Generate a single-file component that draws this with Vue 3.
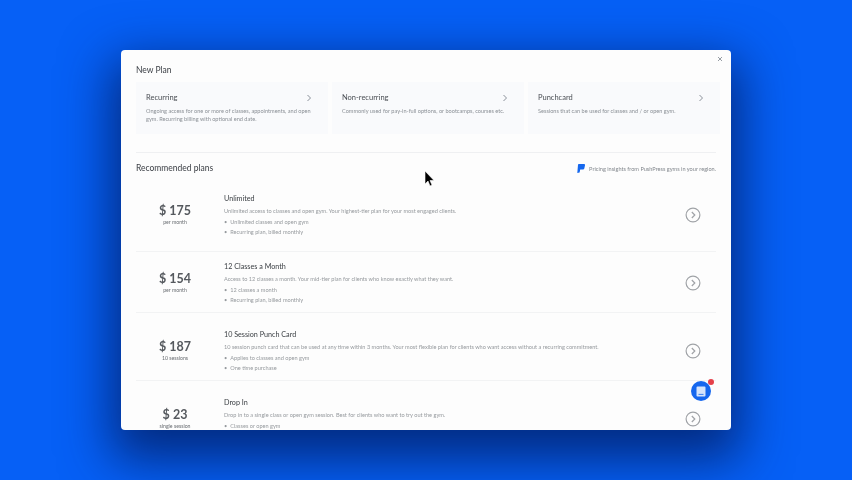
<template>
  <div class="stage">
    <section class="modal">
      <button class="close" aria-label="Close">
        <svg width="6" height="6" viewBox="0 0 6 6"><path d="M1 1l4 4M5 1L1 5" fill="none" stroke="#8b929a" stroke-width=".9" /></svg>
      </button>
      <h2 class="section-title">New Plan</h2>

      <div class="types">
        <div v-for="t in planTypes" :key="t.name" class="type-card">
          <div class="type-head">
            <span>{{ t.name }}</span>
            <svg class="chev" width="6" height="8" viewBox="0 0 6 8"><path d="M1.5 1l3 3-3 3" fill="none" stroke="#8a9099" stroke-width="1" /></svg>
          </div>
          <p>{{ t.text }}</p>
        </div>
      </div>

      <hr class="rule" />

      <div class="rec-head">
        <h2 class="section-title">Recommended plans</h2>
        <div class="insight">
          <svg width="8" height="9" viewBox="0 0 8 9"><path d="M1.8 0H7a1 1 0 0 1 1 1.200L7.300 4.600a1 1 0 0 1-1 .8H3.200L2.600 8.400 0.300 9 1 .8A.9.9 0 0 1 1.800 0z" fill="#1567ee" /></svg>
          <span>Pricing insights from PushPress gyms in your region.</span>
        </div>
      </div>

      <div class="plans">
        <article v-for="p in plans" :key="p.name" class="plan">
          <div class="price">
            <strong>$ {{ p.price }}</strong>
            <small>{{ p.unit }}</small>
          </div>
          <div class="info">
            <h3>{{ p.name }}</h3>
            <p>{{ p.text }}</p>
            <ul>
              <li v-for="b in p.bullets" :key="b">{{ b }}</li>
            </ul>
          </div>
          <svg class="go" width="16" height="16" viewBox="0 0 16 16">
            <circle cx="8" cy="8" r="6.900" fill="none" stroke="#a0a3a7" stroke-width="1.200" />
            <path d="M6.800 5L9.800 8l-3 3" fill="none" stroke="#a0a3a7" stroke-width="1.200" />
          </svg>
        </article>
      </div>

      <div class="chat">
        <svg width="10" height="11" viewBox="0 0 10 11"><path d="M1.500 0.500h7a1 1 0 0 1 1 1v8a1 1 0 0 1-1 1h-7a1 1 0 0 1-1-1v-8a1 1 0 0 1 1-1z" fill="#d5e4fb" /><path d="M2.500 8.400h5" stroke="#1567ee" stroke-width=".8" /></svg>
        <i class="dot"></i>
      </div>
    </section>

    <svg class="cursor" width="11" height="17" viewBox="0 0 11 17">
      <path d="M1 1v13l3-3 2 5 2-1-2-4.500h4z" fill="#000" stroke="#fff" stroke-width=".6" />
    </svg>
  </div>
</template>

<script setup>
const planTypes = [
  { name: 'Recurring', text: 'Ongoing access for one or more of classes, appointments, and open gym. Recurring billing with optional end date.' },
  { name: 'Non-recurring', text: 'Commonly used for pay-in-full options, or bootcamps, courses etc.' },
  { name: 'Punchcard', text: 'Sessions that can be used for classes and / or open gym.' }
]

const plans = [
  {
    name: 'Unlimited', price: 175, unit: 'per month',
    text: 'Unlimited access to classes and open gym. Your highest-tier plan for your most engaged clients.',
    bullets: ['Unlimited classes and open gym', 'Recurring plan, billed monthly']
  },
  {
    name: '12 Classes a Month', price: 154, unit: 'per month',
    text: 'Access to 12 classes a month. Your mid-tier plan for clients who know exactly what they want.',
    bullets: ['12 classes a month', 'Recurring plan, billed monthly']
  },
  {
    name: '10 Session Punch Card', price: 187, unit: '10 sessions',
    text: '10 session punch card that can be used at any time within 3 months. Your most flexible plan for clients who want access without a recurring commitment.',
    bullets: ['Applies to classes and open gym', 'One time purchase']
  },
  {
    name: 'Drop In', price: 23, unit: 'single session',
    text: 'Drop in to a single class or open gym session. Best for clients who want to try out the gym.',
    bullets: ['Classes or open gym']
  }
]
</script>

<style>
html, body { margin: 0; }
</style>

<style scoped>
.stage {
  position: relative;
  width: 852px;
  height: 480px;
  overflow: hidden;
  padding-top: 50px;
  box-sizing: border-box;
  background: #0660f6;
  font-family: Lato, "Open Sans", sans-serif;
}

.modal {
  position: relative;
  width: 610px;
  height: 380px;
  margin-left: 121px;
  padding: 15px 15px 0;
  box-sizing: border-box;
  overflow: hidden;
  background: #fdfdfd;
  border-radius: 4px;
  box-shadow: 0 20px 50px 10px rgba(3, 30, 100, 0.8);
  filter: blur(0.4px);
}

.close {
  position: absolute;
  top: 6px;
  right: 8px;
  display: flex;
  border: 0;
  padding: 0;
  background: none;
}

.section-title {
  margin: 0;
  font-size: 8.500px;
  line-height: 11px;
  font-weight: 400;
  color: #3a3e44;
}

.types {
  display: grid;
  grid-template-columns: repeat(3, 192px);
  gap: 4px;
  margin-top: 6px;
}
.type-card {
  height: 52px;
  padding: 10px 10px 0;
  box-sizing: border-box;
  background: #f9fafc;
}
.type-head {
  display: flex;
  justify-content: space-between;
  align-items: center;
  padding-right: 6px;
  font-size: 7.500px;
  line-height: 12px;
  color: #4a4e54;
}
.type-card p {
  margin: 3px 0 0;
  font-size: 5.600px;
  line-height: 8.200px;
  color: #8b9096;
}

.rule {
  margin: 18px 0 0;
  border: 0;
  border-top: 1px solid #eff0f2;
}

.rec-head {
  display: flex;
  justify-content: space-between;
  align-items: center;
  margin-top: 10px;
}
.insight {
  display: flex;
  align-items: center;
  gap: 4px;
  font-size: 5.600px;
  color: #83888e;
}

.plans {
  margin-top: 12px;
}
.plan {
  display: flex;
  padding-right: 16px;
  box-sizing: border-box;
  border-bottom: 1px solid #f2f3f4;
}
/* the rows in the reference have uneven spacing around their dividers */
.plan:nth-child(1) { height: 66px; padding-top: 8px; }
.plan:nth-child(2) { height: 61px; padding-top: 10px; }
.plan:nth-child(3) { height: 68px; padding-top: 17px; }
.plan:nth-child(4) { height: 68px; padding-top: 17px; border-bottom: 0; }

.price {
  display: flex;
  flex-direction: column;
  align-items: center;
  width: 78px;
  margin-top: 8.500px;
}
.price strong {
  font-size: 12.500px;
  line-height: 15px;
  font-weight: 700;
  color: #55595e;
}
.price small {
  font-size: 5.200px;
  line-height: 8px;
  color: #686c71;
}
.info {
  flex: 1;
  margin-left: 10px;
}
.info h3 {
  margin: 0;
  font-size: 7.200px;
  line-height: 10px;
  font-weight: 400;
  color: #3c4045;
}
.info p {
  margin: 3px 0 0;
  font-size: 5.600px;
  line-height: 8px;
  color: #969a9e;
}
.info ul {
  list-style: none;
  margin: 2px 0 0;
  padding: 0;
  font-size: 5.600px;
  line-height: 10px;
  color: #969a9e;
}
.info li::before {
  content: "•";
  margin-right: 3px;
}
.go {
  margin: 13px 0 0 0;
  transform: translateX(1px);
}

.chat {
  position: absolute;
  top: 331px;
  left: 570px;
  display: flex;
  align-items: center;
  justify-content: center;
  width: 20px;
  height: 20px;
  border-radius: 50%;
  background: #1567ee;
}
.dot {
  position: absolute;
  top: -2px;
  right: -3px;
  width: 6px;
  height: 6px;
  border-radius: 50%;
  background: #e5404a;
}

.cursor {
  position: absolute;
  top: 170px;
  left: 424px;
}
</style>
